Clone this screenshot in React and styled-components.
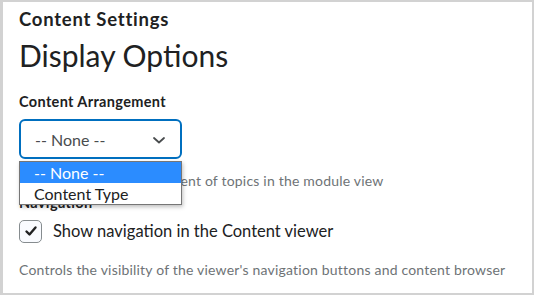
import React, { useState } from "react";
import styled, { createGlobalStyle } from "styled-components";

const GlobalStyle = createGlobalStyle`
  html, body {
    margin: 0;
    padding: 0;
    background: #ffffff;
  }
  body {
    font-family: Lato, "Noto Sans", sans-serif;
    color: #202122;
  }
`;

const options = ["-- None --", "Content Type"];

export default function App() {
  const [selected, setSelected] = useState(0);
  const [checked, setChecked] = useState(true);

  return (
    <>
      <GlobalStyle />
      <Frame>
        <SectionTitle>Content Settings</SectionTitle>
        <PageTitle>Display Options</PageTitle>

        <FieldLabel>Content Arrangement</FieldLabel>
        <SelectWrapper>
          <SelectBox>
            <span>{options[selected]}</span>
            <Chevron viewBox="0 0 12 7">
              <path d="M1 1l5 4.5L11 1" />
            </Chevron>
          </SelectBox>
          <OptionList>
            {options.map((opt, i) => (
              <OptionItem
                key={opt}
                $active={i === selected}
                onClick={() => setSelected(i)}
              >
                {opt}
              </OptionItem>
            ))}
          </OptionList>
        </SelectWrapper>
        <HelpText>Determines the arrangement of topics in the module view</HelpText>

        <FieldLabel $tight>Navigation</FieldLabel>
        <CheckRow onClick={() => setChecked((prev) => !prev)}>
          <CheckBox>
            {checked && (
              <svg width="14" height="14" viewBox="0 0 14 14">
                <path
                  d="M2.5 7.5l3 3L11.5 3.5"
                  fill="none"
                  stroke="#202122"
                  strokeWidth="2.4"
                  strokeLinecap="round"
                  strokeLinejoin="round"
                />
              </svg>
            )}
          </CheckBox>
          <CheckLabel>Show navigation in the Content viewer</CheckLabel>
        </CheckRow>
        <HelpText $last>
          Controls the visibility of the viewer's navigation buttons and content browser
        </HelpText>
      </Frame>
    </>
  );
}

const Frame = styled.div`
  box-sizing: border-box;
  width: 534px;
  height: 295px;
  border: 2px solid #d2d2d2;
  border-left-width: 3px;
  padding: 5px 16px 0 16px;
  display: flex;
  flex-direction: column;
  overflow: hidden;
`;

const SectionTitle = styled.div`
  font-size: 18.5px;
  font-weight: 700;
  line-height: 24px;
  letter-spacing: 0.75px;
  color: #202122;
`;

const PageTitle = styled.h1`
  margin: 6px 0 0 0;
  font-size: 30px;
  font-weight: 400;
  line-height: 36px;
  color: #202122;
`;

const FieldLabel = styled.div`
  margin-top: ${(props) => (props.$tight ? "2px" : "19px")};
  font-size: 14.5px;
  font-weight: 700;
  line-height: 20px;
  letter-spacing: 0.35px;
  color: #202122;
`;

const SelectWrapper = styled.div`
  position: relative;
  margin-top: 7px;
  width: 163px;
`;

const SelectBox = styled.div`
  box-sizing: border-box;
  height: 40px;
  border: 2px solid #006fbf;
  border-radius: 6px;
  padding: 0 15px 0 14px;
  display: flex;
  align-items: center;
  justify-content: space-between;
  font-size: 16px;
  color: #494c4e;
`;

const Chevron = styled.svg`
  width: 12px;
  height: 7px;
  margin-top: 2px;
  fill: none;
  stroke: #494c4e;
  stroke-width: 1.8;
  stroke-linecap: round;
  stroke-linejoin: round;
`;

const OptionList = styled.div`
  position: absolute;
  top: 42px;
  left: 0;
  width: 163px;
  box-sizing: border-box;
  border: 1px solid #767676;
  background: #ffffff;
  box-shadow: 1px 2px 4px rgba(0, 0, 0, 0.25);
  z-index: 2;
`;

const OptionItem = styled.div`
  height: 21px;
  line-height: 21px;
  padding-left: 14px;
  font-size: 16px;
  background: ${(props) => (props.$active ? "#2b8cff" : "#ffffff")};
  color: ${(props) => (props.$active ? "#ffffff" : "#202122")};
  cursor: default;
`;

const HelpText = styled.div`
  margin-top: ${(props) => (props.$last ? "17px" : "12px")};
  font-size: 14px;
  line-height: 20px;
  letter-spacing: 0.2px;
  color: #6e7376;
`;

const CheckRow = styled.div`
  margin-top: 6px;
  display: flex;
  align-items: center;
  gap: 11px;
  cursor: pointer;
`;

const CheckBox = styled.div`
  box-sizing: border-box;
  width: 23px;
  height: 23px;
  margin-left: 0;
  border: 1px solid #868c8f;
  border-radius: 5px;
  background: #f9fbff;
  display: flex;
  align-items: center;
  justify-content: center;
`;

const CheckLabel = styled.span`
  font-size: 16.5px;
  line-height: 24px;
  color: #202122;
`;
